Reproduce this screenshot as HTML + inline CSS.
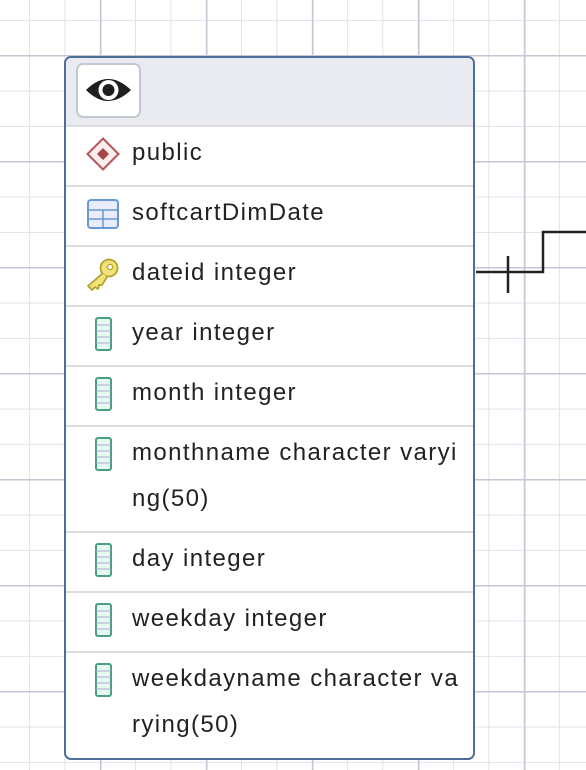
<!DOCTYPE html>
<html><head><style>
html,body{margin:0;padding:0}
body{width:586px;height:770px;position:relative;overflow:hidden;font-family:"Liberation Sans",Roboto,sans-serif;
background-color:#fff;
background-image:
linear-gradient(to right,#c4c7d4 1.5px,transparent 1.5px),
linear-gradient(to bottom,#c4c7d4 1.5px,transparent 1.5px),
linear-gradient(to right,#e2e4ec 1.2px,transparent 1.2px),
linear-gradient(to bottom,#e2e4ec 1.2px,transparent 1.2px);
background-size:106px 106px,106px 106px,35.33px 35.33px,35.33px 35.33px;
background-position:100px 0,0 55px,29px 0,0 20px;}
.card{position:absolute;left:64px;top:56px;width:407px;height:700px;border:2px solid #4f6d99;border-radius:7px;background:#fff;overflow:hidden}
.hdr{height:67px;background:#eaebf1;border-bottom:2px solid #dcdde3;position:relative}
.eye{position:absolute;left:10px;top:5px;width:61px;height:51px;border:2px solid #c4c8d2;border-radius:7px;background:#fff}
.row{border-bottom:2px solid #dcdde3;position:relative;font-size:24px;color:#222;padding-left:66px;line-height:46px;padding-top:3px;padding-bottom:9px;letter-spacing:1.4px}
.row svg{position:absolute;left:20px;top:10px}
</style></head><body>
<svg style="position:absolute;left:0;top:0" width="586" height="770">
<path d="M476 272 H543 V232 H586" fill="none" stroke="#222" stroke-width="2.5"/>
<path d="M508 256 V293" stroke="#222" stroke-width="2.5"/>
</svg>
<div class="card">
<div class="hdr"><div class="eye"><svg width="61" height="51" viewBox="0 0 61 51"><path d="M8 25 Q30 3 53 25 Q30 47 8 25Z" fill="#1e1e1e"/><circle cx="30.5" cy="25" r="10" fill="#fff"/><circle cx="30.5" cy="25" r="6" fill="#1e1e1e"/></svg></div></div>
<div class="row"><svg width="34" height="34" viewBox="0 0 34 34"><path d="M17 1.5 L32.5 17 L17 32.5 L1.5 17Z" fill="#fbeeee" stroke="#b85656" stroke-width="2"/><path d="M17 11 L23 17 L17 23 L11 17Z" fill="#a84545"/></svg>public</div>
<div class="row"><svg width="34" height="34" viewBox="0 0 34 34"><rect x="2" y="3" width="30" height="28" rx="3" fill="#e7eef9" stroke="#6c97d6" stroke-width="2"/><path d="M2 13 H32 M2 22 H32 M17 13 V31" stroke="#6c97d6" stroke-width="1.5"/></svg>softcartDimDate</div>
<div class="row"><svg width="34" height="34" viewBox="0 0 34 34"><circle cx="23" cy="11" r="8.5" fill="#f2e27a" stroke="#b3a22a" stroke-width="1.8"/><circle cx="24" cy="10" r="2.6" fill="#fff" stroke="#b3a22a" stroke-width="1.3"/><path d="M17 16 L2 29 L6 33 L9 30 L12 32 L13 28 L16 28 L21 20" fill="#f2e27a" stroke="#b3a22a" stroke-width="1.8" stroke-linejoin="round"/></svg>dateid integer</div>
<div class="row"><svg width="34" height="34" viewBox="0 0 34 34"><rect x="10" y="1" width="15" height="32" rx="2" fill="#e5f8f1" stroke="#4b9e80" stroke-width="2"/><path d="M10 8 H25 M10 14 H25 M10 20 H25 M10 26 H25" stroke="#aac" stroke-width="1"/></svg>year integer</div>
<div class="row"><svg width="34" height="34" viewBox="0 0 34 34"><rect x="10" y="1" width="15" height="32" rx="2" fill="#e5f8f1" stroke="#4b9e80" stroke-width="2"/><path d="M10 8 H25 M10 14 H25 M10 20 H25 M10 26 H25" stroke="#aac" stroke-width="1"/></svg>month integer</div>
<div class="row"><svg width="34" height="34" viewBox="0 0 34 34"><rect x="10" y="1" width="15" height="32" rx="2" fill="#e5f8f1" stroke="#4b9e80" stroke-width="2"/><path d="M10 8 H25 M10 14 H25 M10 20 H25 M10 26 H25" stroke="#aac" stroke-width="1"/></svg>monthname character varyi<br>ng(50)</div>
<div class="row"><svg width="34" height="34" viewBox="0 0 34 34"><rect x="10" y="1" width="15" height="32" rx="2" fill="#e5f8f1" stroke="#4b9e80" stroke-width="2"/><path d="M10 8 H25 M10 14 H25 M10 20 H25 M10 26 H25" stroke="#aac" stroke-width="1"/></svg>day integer</div>
<div class="row"><svg width="34" height="34" viewBox="0 0 34 34"><rect x="10" y="1" width="15" height="32" rx="2" fill="#e5f8f1" stroke="#4b9e80" stroke-width="2"/><path d="M10 8 H25 M10 14 H25 M10 20 H25 M10 26 H25" stroke="#aac" stroke-width="1"/></svg>weekday integer</div>
<div class="row" style="border-bottom:none"><svg width="34" height="34" viewBox="0 0 34 34"><rect x="10" y="1" width="15" height="32" rx="2" fill="#e5f8f1" stroke="#4b9e80" stroke-width="2"/><path d="M10 8 H25 M10 14 H25 M10 20 H25 M10 26 H25" stroke="#aac" stroke-width="1"/></svg>weekdayname character va<br>rying(50)</div>
</div>
</body></html>
